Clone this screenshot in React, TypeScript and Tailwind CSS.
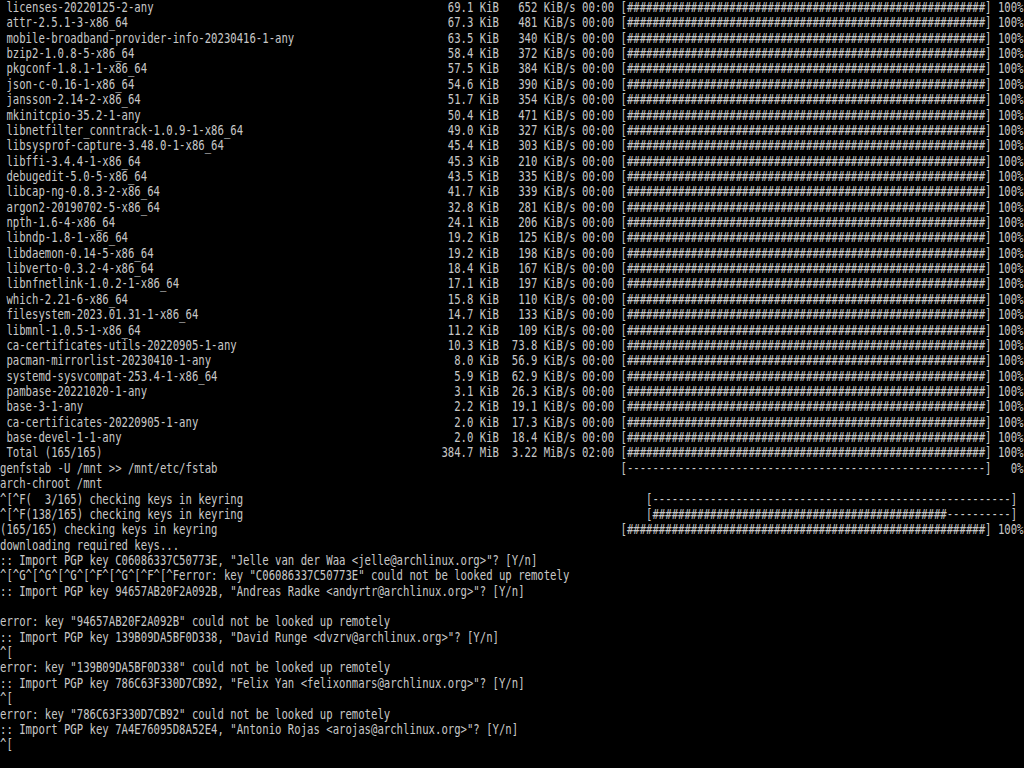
import React from "react";

const COLS = 160;

function pad(s: string, n: number) {
  return s.length >= n ? s : s + " ".repeat(n - s.length);
}
function lpad(s: string, n: number) {
  return s.length >= n ? s : " ".repeat(n - s.length) + s;
}

function pkg(name: string, size: string, unit: string, rate: string, runit: string, time: string) {
  let s = pad(" " + name, 68);
  s += lpad(size, 6) + " " + unit;
  s = pad(s, 78);
  s += lpad(rate, 6) + " " + runit + " " + time + " ";
  s += "[" + "#".repeat(56) + "] 100%";
  return s;
}

const pkgs: [string, string, string][] = [
  ["licenses-20220125-2-any", "69.1", "652"],
  ["attr-2.5.1-3-x86_64", "67.3", "481"],
  ["mobile-broadband-provider-info-20230416-1-any", "63.5", "340"],
  ["bzip2-1.0.8-5-x86_64", "58.4", "372"],
  ["pkgconf-1.8.1-1-x86_64", "57.5", "384"],
  ["json-c-0.16-1-x86_64", "54.6", "390"],
  ["jansson-2.14-2-x86_64", "51.7", "354"],
  ["mkinitcpio-35.2-1-any", "50.4", "471"],
  ["libnetfilter_conntrack-1.0.9-1-x86_64", "49.0", "327"],
  ["libsysprof-capture-3.48.0-1-x86_64", "45.4", "303"],
  ["libffi-3.4.4-1-x86_64", "45.3", "210"],
  ["debugedit-5.0-5-x86_64", "43.5", "335"],
  ["libcap-ng-0.8.3-2-x86_64", "41.7", "339"],
  ["argon2-20190702-5-x86_64", "32.8", "281"],
  ["npth-1.6-4-x86_64", "24.1", "206"],
  ["libndp-1.8-1-x86_64", "19.2", "125"],
  ["libdaemon-0.14-5-x86_64", "19.2", "198"],
  ["libverto-0.3.2-4-x86_64", "18.4", "167"],
  ["libnfnetlink-1.0.2-1-x86_64", "17.1", "197"],
  ["which-2.21-6-x86_64", "15.8", "110"],
  ["filesystem-2023.01.31-1-x86_64", "14.7", "133"],
  ["libmnl-1.0.5-1-x86_64", "11.2", "109"],
  ["ca-certificates-utils-20220905-1-any", "10.3", "73.8"],
  ["pacman-mirrorlist-20230410-1-any", "8.0", "56.9"],
  ["systemd-sysvcompat-253.4-1-x86_64", "5.9", "62.9"],
  ["pambase-20221020-1-any", "3.1", "26.3"],
  ["base-3-1-any", "2.2", "19.1"],
  ["ca-certificates-20220905-1-any", "2.0", "17.3"],
  ["base-devel-1-1-any", "2.0", "18.4"],
];

const lines: string[] = [
  ...pkgs.map(([n, s, r]) => pkg(n, s, "KiB", r, "KiB/s", "00:00")),
  pkg("Total (165/165)", "384.7", "MiB", "3.22", "MiB/s", "02:00"),
  pad("genfstab -U /mnt >> /mnt/etc/fstab", 97) + "[" + "-".repeat(56) + "]   0%",
  "arch-chroot /mnt",
  pad("^[^F(  3/165) checking keys in keyring", 101) + "[" + "-".repeat(56) + "]",
  pad("^[^F(138/165) checking keys in keyring", 101) + "[" + "#".repeat(46) + "-".repeat(10) + "]",
  pad("(165/165) checking keys in keyring", 97) + "[" + "#".repeat(56) + "] 100%",
  "downloading required keys...",
  ':: Import PGP key C06086337C50773E, "Jelle van der Waa <jelle@archlinux.org>"? [Y/n]',
  '^[^G^[^G^[^G^[^F^[^G^[^F^[^Ferror: key "C06086337C50773E" could not be looked up remotely',
  ':: Import PGP key 94657AB20F2A092B, "Andreas Radke <andyrtr@archlinux.org>"? [Y/n]',
  "",
  'error: key "94657AB20F2A092B" could not be looked up remotely',
  ':: Import PGP key 139B09DA5BF0D338, "David Runge <dvzrv@archlinux.org>"? [Y/n]',
  "^[",
  'error: key "139B09DA5BF0D338" could not be looked up remotely',
  ':: Import PGP key 786C63F330D7CB92, "Felix Yan <felixonmars@archlinux.org>"? [Y/n]',
  "^[",
  'error: key "786C63F330D7CB92" could not be looked up remotely',
  ':: Import PGP key 7A4E76095D8A52E4, "Antonio Rojas <arojas@archlinux.org>"? [Y/n]',
  "^[",
];

export default function App() {
  return (
    <div className="w-[1024px] h-[768px] overflow-hidden bg-black">
      <div
        className="w-[1280px] origin-top-left scale-x-[0.8] text-[#c8c8c8] text-[13.29px] leading-[15.36px] whitespace-pre"
        style={{ fontFamily: '"DejaVu Sans Mono", "Liberation Mono", monospace' }}
      >
        {lines.map((l, i) => (
          <div key={i} className="h-[15.36px]">
            {l.slice(0, COLS) || " "}
          </div>
        ))}
      </div>
    </div>
  );
}
